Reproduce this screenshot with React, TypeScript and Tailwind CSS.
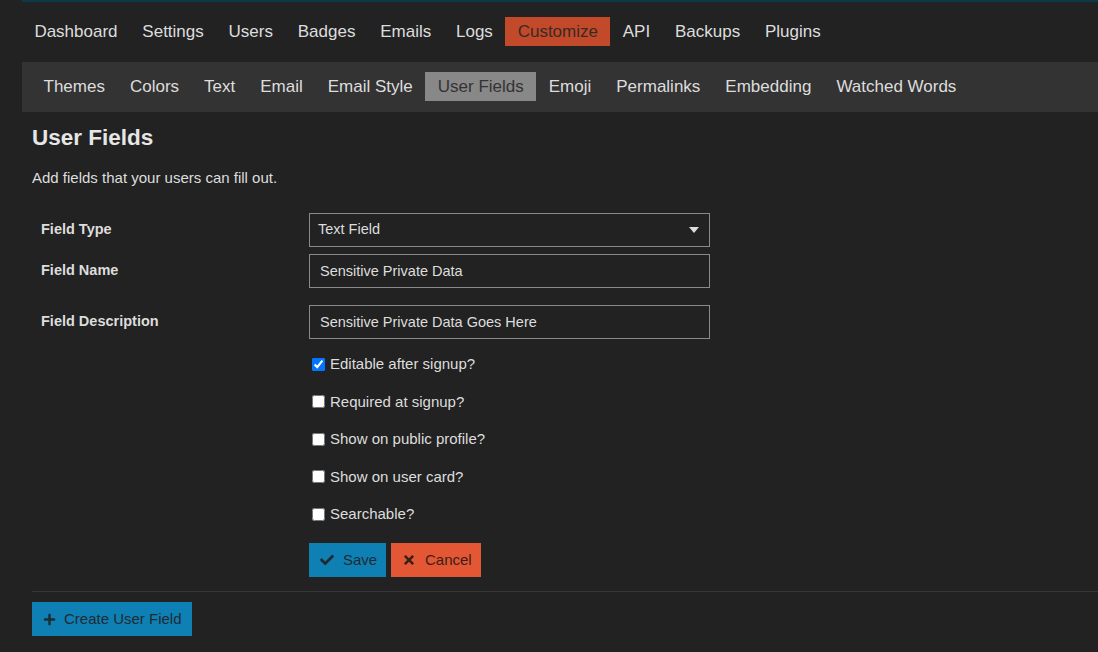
import React from "react";
import { FaCheck, FaTimes, FaPlus } from "react-icons/fa";

const topNav = ["Dashboard", "Settings", "Users", "Badges", "Emails", "Logs", "Customize", "API", "Backups", "Plugins"];
const subNav = ["Themes", "Colors", "Text", "Email", "Email Style", "User Fields", "Emoji", "Permalinks", "Embedding", "Watched Words"];
const options = [
  { label: "Editable after signup?", checked: true },
  { label: "Required at signup?", checked: false },
  { label: "Show on public profile?", checked: false },
  { label: "Show on user card?", checked: false },
  { label: "Searchable?", checked: false },
];

export default function App() {
  return (
    <div
      className="w-[1098px] h-[652px] overflow-hidden bg-[#222222] text-[#dddddd]"
      style={{ fontFamily: '"Liberation Sans", Arial, sans-serif' }}
    >
      <div className="pl-[22px]">
        {/* header accent strip */}
        <div className="h-[2px] bg-[#0d3a4b]" />

        {/* primary admin nav */}
        <nav className="flex pt-[15px] h-[60px] text-[17px]">
          {topNav.map((item) => (
            <span
              key={item}
              className={
                "h-[29px] px-[12.4px] flex items-center leading-none " +
                (item === "Customize" ? "bg-[#c2492a] text-[#3a2a25]" : "")
              }
            >
              {item}
            </span>
          ))}
        </nav>

        {/* customize sub nav */}
        <nav className="flex bg-[#333333] h-[50px] pt-[10px] pl-[9px] text-[17px]">
          {subNav.map((item) => (
            <span
              key={item}
              className={
                "h-[29px] px-[12.5px] flex items-center leading-none " +
                (item === "User Fields" ? "bg-[#888888] text-[#333333]" : "")
              }
            >
              {item}
            </span>
          ))}
        </nav>

        <div className="pl-[10px]">
          <h2 className="text-[22.5px] font-bold leading-none mt-[15px] text-[#e6e6e6]">User Fields</h2>
          <p className="text-[15px] leading-none mt-[20px]">Add fields that your users can fill out.</p>

          {/* field editor */}
          <div className="mt-[28px] text-[14.5px]">
            <div className="flex items-center h-[34px]">
              <div className="w-[277px] pl-[9px] font-bold">Field Type</div>
              <div className="w-[401px] h-[34px] border border-[#8a8a8a] flex items-center justify-between pl-[8px] pr-[10px]">
                <span>Text Field</span>
                <svg width="10" height="6" viewBox="0 0 10 6">
                  <path d="M0 0 H10 L5 6 Z" fill="#dddddd" />
                </svg>
              </div>
            </div>
            <div className="flex items-center h-[34px] mt-[7px]">
              <div className="w-[277px] pl-[9px] font-bold">Field Name</div>
              <input
                className="w-[401px] h-[34px] border border-[#8a8a8a] bg-transparent px-[10px] text-[#dddddd] outline-none"
                defaultValue="Sensitive Private Data"
              />
            </div>
            <div className="flex items-center h-[34px] mt-[17px]">
              <div className="w-[277px] pl-[9px] font-bold">Field Description</div>
              <input
                className="w-[401px] h-[34px] border border-[#8a8a8a] bg-transparent px-[10px] text-[#dddddd] outline-none"
                defaultValue="Sensitive Private Data Goes Here"
              />
            </div>

            <div className="ml-[277px] mt-[7px] text-[15px]">
              {options.map((o) => (
                <label key={o.label} className="flex items-center h-[37.5px]">
                  <input
                    type="checkbox"
                    defaultChecked={o.checked}
                    className="w-[13px] h-[13px] ml-[3px] mr-[5px] m-0"
                  />
                  <span>{o.label}</span>
                </label>
              ))}
              <div className="flex gap-[5px] mt-[10px]">
                <button className="h-[34px] w-[77px] bg-[#0f80b3] text-[#1f2b33] flex items-center pl-[11px] gap-[9px] text-[15px]">
                  <FaCheck className="w-[14px] h-[14px]" />
                  <span>Save</span>
                </button>
                <button className="h-[34px] w-[90px] bg-[#e45735] text-[#3a1f18] flex items-center pl-[12px] gap-[10px] text-[15px]">
                  <FaTimes className="w-[12px] h-[14px]" />
                  <span>Cancel</span>
                </button>
              </div>
            </div>
          </div>

          <div className="h-px bg-[#363636] mt-[14px]" />
          <button className="mt-[10px] h-[34px] w-[160px] bg-[#0f80b3] text-[#1f2b33] flex items-center pl-[11px] gap-[8px] text-[15px]">
            <FaPlus className="w-[13px] h-[13px]" />
            <span>Create User Field</span>
          </button>
        </div>
      </div>
    </div>
  );
}
